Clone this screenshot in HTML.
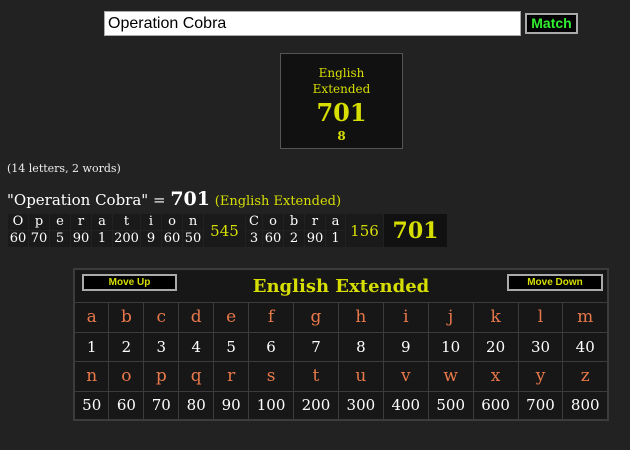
<!DOCTYPE html>
<html><head><meta charset="utf-8"><style>
*{margin:0;padding:0;box-sizing:border-box}
body{width:630px;height:450px;background:#222;position:relative;overflow:hidden;font-family:"DejaVu Serif",serif;color:#fff}
.a{position:absolute}
#inp{left:104px;top:11px;width:417px;height:25px;background:#fff;border:1px solid #aaa;font-family:"Liberation Sans",sans-serif;font-size:16px;color:#000;padding:2px 3px;line-height:19px}
#match{left:525px;top:13px;width:53px;height:21px;background:#000;border:2px solid #aaa;font-family:"Liberation Sans",sans-serif;font-weight:bold;color:#3e3;font-size:14px;text-align:center;line-height:17px}
#box{left:280px;top:53px;width:123px;height:96px;background:#111;border:1px solid #555;text-align:center;color:#d7df01}
.y{color:#d7df01}
table{border-collapse:collapse}
#bd{left:7px;top:213px;background:#1a1a1a}
#bd td{border:1px solid #222;text-align:center;font-size:13px;padding:0;height:17px;line-height:16px}
#mt{left:73px;top:268px;width:536px;background:#171717;border:2px solid #3c3c3c}
#mt td{border:1px solid #3c3c3c;text-align:center;padding:0}
.l td{color:#e8784a;font-size:17px;height:30px}
.n td{color:#fff;font-size:15px;height:29px}
.btn{position:absolute;top:4px;height:17px;background:#000;border:2px solid #aaa;color:#d7df01;font-family:"Liberation Sans",sans-serif;font-weight:bold;font-size:10px;text-align:center;line-height:13px}
</style></head><body>
<div class="a" id="inp">Operation Cobra</div>
<div class="a" id="match">Match</div>
<div class="a" id="box">
<div style="position:absolute;top:11px;width:100%;font-size:12px;line-height:16px">English<br>Extended</div>
<div style="position:absolute;top:44px;width:100%;font-size:24px;font-weight:bold;line-height:30px">701</div>
<div style="position:absolute;top:75px;width:100%;font-size:12px;font-weight:bold">8</div>
</div>
<div class="a" style="left:7px;top:162px;font-size:11px;color:#eee">(14 letters, 2 words)</div>
<div class="a" style="left:7px;top:187px;font-size:15px;line-height:24px;white-space:nowrap">"Operation Cobra" = <b style="font-size:19px">701</b> <span class="y" style="font-size:13px">(English Extended)</span></div>
<table class="a" id="bd"><tr>
<td style="width:21px">O</td><td style="width:21px">p</td><td style="width:21px">e</td><td style="width:21px">r</td><td style="width:21px">a</td><td style="width:28px">t</td><td style="width:21px">i</td><td style="width:21px">o</td><td style="width:21px">n</td>
<td rowspan="2" class="y" style="width:42px;font-size:15px">545</td>
<td style="width:17px">C</td><td style="width:21px">o</td><td style="width:21px">b</td><td style="width:21px">r</td><td style="width:20px">a</td>
<td rowspan="2" class="y" style="width:38px;font-size:15px">156</td>
<td rowspan="2" class="y" style="width:64px;font-size:22px;font-weight:bold;background:#111">701</td></tr>
<tr><td>60</td><td>70</td><td>5</td><td>90</td><td>1</td><td>200</td><td>9</td><td>60</td><td>50</td><td>3</td><td>60</td><td>2</td><td>90</td><td>1</td></tr></table>
<table class="a" id="mt">
<tr><td colspan="13" style="height:33px;position:relative"><div class="btn" style="left:7px;width:95px">Move Up</div><div class="btn" style="left:432px;width:96px">Move Down</div><span class="y" style="font-size:18px;font-weight:bold;position:relative;top:1px">English Extended</span></td></tr>
<tr class="l"><td style="width:35px">a</td><td style="width:35px">b</td><td style="width:35px">c</td><td style="width:35px">d</td><td style="width:35px">e</td><td style="width:45px">f</td><td style="width:45px">g</td><td style="width:45px">h</td><td style="width:45px">i</td><td style="width:45px">j</td><td style="width:45px">k</td><td style="width:45px">l</td><td style="width:45px">m</td></tr>
<tr class="n"><td>1</td><td>2</td><td>3</td><td>4</td><td>5</td><td>6</td><td>7</td><td>8</td><td>9</td><td>10</td><td>20</td><td>30</td><td>40</td></tr>
<tr class="l"><td>n</td><td>o</td><td>p</td><td>q</td><td>r</td><td>s</td><td>t</td><td>u</td><td>v</td><td>w</td><td>x</td><td>y</td><td>z</td></tr>
<tr class="n"><td>50</td><td>60</td><td>70</td><td>80</td><td>90</td><td>100</td><td>200</td><td>300</td><td>400</td><td>500</td><td>600</td><td>700</td><td>800</td></tr>
</table>
</body></html>
